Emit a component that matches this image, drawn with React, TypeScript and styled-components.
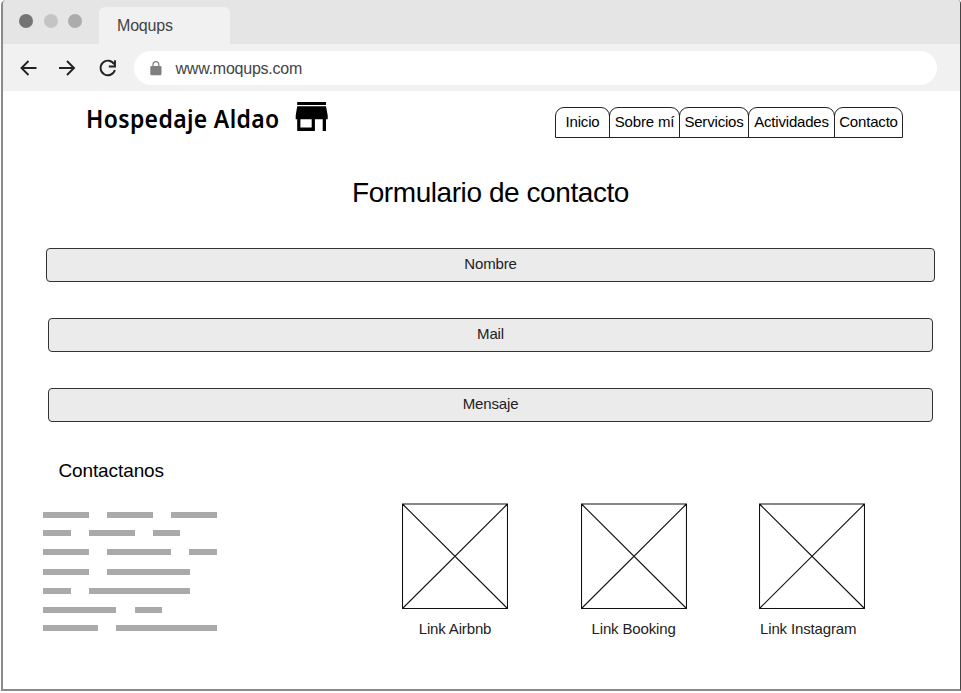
import React from "react";
import styled, { createGlobalStyle } from "styled-components";

const Global = createGlobalStyle`
  *, *::before, *::after { box-sizing: border-box; }
  body { margin: 0; background: #fff; font-family: "Liberation Sans", Arial, sans-serif; overflow: hidden; }
  h1, h2, p { margin: 0; font-weight: 400; }
  svg { display: block; flex: none; }
`;

const Window = styled.div`
  width: 960px;
  height: 691px;
  margin-left: 1px;
  border: solid #888b8b;
  border-width: 0 1px 2px 2px;
  border-right-color: #444;
  border-radius: 5px 4px 0 0;
  overflow: hidden;
  background: #fff;
  color: #000;
`;

const TitleBar = styled.header`
  display: flex;
  height: 44px;
  padding: 7px 0 0 16px;
  background: #e5e5e5;
`;

const Dots = styled.div`
  display: flex;
  gap: 10.6px;
  width: 80px;
  padding-top: 7px;
`;

const Dot = styled.span<{ $color: string }>`
  width: 14px;
  height: 14px;
  border-radius: 50%;
  background: ${(p) => p.$color};
`;

const BrowserTab = styled.div`
  width: 131px;
  height: 37px;
  padding-left: 18px;
  border-radius: 6px 6px 0 0;
  background: #f1f1f1;
  color: #444;
  font-size: 16px;
  letter-spacing: -0.2px;
  line-height: 37px;
`;

const ToolBar = styled.div`
  display: flex;
  align-items: center;
  height: 47px;
  padding: 0 23px 0 13px;
  background: #f1f1f1;
`;

const Controls = styled.div`
  display: flex;
  gap: 14px;
  width: 118px;
  padding-top: 1px;
`;

const Address = styled.div`
  display: flex;
  align-items: center;
  flex: 1;
  height: 34px;
  padding-left: 15.5px;
  gap: 14px;
  margin-top: 1px;
  border-radius: 17px;
  background: #fff;
  color: #444;
  font-size: 16px;
  letter-spacing: -0.23px;
  line-height: 18px;

  span { padding-top: 1px; }
`;

const SiteHeader = styled.div`
  display: flex;
  align-items: flex-start;
  justify-content: space-between;
  height: 76px;
  padding: 11px 57px 0 83px;
`;

const Brand = styled.div`
  display: flex;
  gap: 15px;
`;

const BrandName = styled.h1`
  width: 194px;
  font-family: "Noto Sans", sans-serif;
  font-size: 26px;
  font-weight: 600;
  line-height: 33px;
  letter-spacing: 0.4px;
  white-space: nowrap;
  transform: scaleX(0.883);
  transform-origin: 0 0;
`;

const Nav = styled.nav`
  display: flex;
  margin-top: 5px;
`;

const NavItem = styled.a<{ $w: number }>`
  width: ${(p) => p.$w}px;
  height: 31px;
  margin-left: -1px;
  border: 1px solid #222;
  border-radius: 9px 9px 0 0;
  font-size: 15px;
  letter-spacing: -0.18px;
  line-height: 27px;
  text-align: center;
  white-space: nowrap;
`;

const FormTitle = styled.h2`
  height: 81px;
  padding-right: 1px;
  padding-left: 19px;
  font-size: 28px;
  letter-spacing: -0.43px;
  line-height: 52px;
  text-align: center;
`;

const Form = styled.div`
  display: flex;
  flex-direction: column;
  align-items: center;
  gap: 36px;
  padding-left: 18px;
`;

const Field = styled.div<{ $w: number }>`
  width: ${(p) => p.$w}px;
  height: 34px;
  border: 1px solid #333;
  border-radius: 4px;
  background: #ebebeb;
  color: #222;
  font-size: 15px;
  letter-spacing: -0.15px;
  line-height: 29px;
  text-align: center;
`;

const Footer = styled.footer`
  display: flex;
  padding: 38px 0 0 40px;
`;

const ContactColumn = styled.div`
  width: 359px;
`;

const ContactTitle = styled.h2`
  padding-left: 15.4px;
  font-size: 19px;
  letter-spacing: -0.1px;
  line-height: 22px;
`;

const TextLines = styled.div`
  display: grid;
  grid-template-rows: 18px 19px 20px 19px 19px 18px 6px;
  margin-top: 30px;
`;

const TextLine = styled.div`
  display: flex;
  gap: 18.2px;
`;

const Word = styled.span<{ $n: number }>`
  width: ${(p) => p.$n * 9.17}px;
  height: 6px;
  background: #aaa;
`;

const Links = styled.div`
  display: grid;
  grid-template-columns: repeat(3, 106px);
  column-gap: 72.6px;
  padding-top: 43px;
`;

const LinkCard = styled.div<{ $shift?: number }>`
  color: #222;
  font-size: 15px;
  letter-spacing: -0.15px;
  line-height: 18px;
  text-align: center;

  p { margin: 11px 0 0 -${(p) => p.$shift ?? 0}px; white-space: nowrap; }
`;

const Stroke = { fill: "none", stroke: "#222", strokeWidth: 1.9 };

const Arrow = ({ right }: { right?: boolean }) => (
  <svg width="25" height="24" viewBox="0 0 25 24" {...Stroke}>
    {right ? <path d="M4 12H19.5M12 5l7 7-7 7" /> : <path d="M20.5 12H5M12.5 5l-7 7 7 7" />}
  </svg>
);

const Reload = () => (
  <svg width="25" height="24" viewBox="-1 0 25 24" {...Stroke}>
    <path d="M19.2 8.3A7.3 7.3 0 1 0 19.9 14" />
    <path d="M20 4.3v6.2h-6.2" />
  </svg>
);

const Lock = () => (
  <svg width="12" height="15" viewBox="0 0 12 15">
    <rect x="0.3" y="5" width="11.2" height="9.3" rx="1.3" fill="#808080" />
    <path d="M3 5.5V3.6a2.9 2.9 0 0 1 5.8 0v1.9" fill="none" stroke="#808080" strokeWidth="1.2" />
  </svg>
);

const Store = () => (
  <svg width="34" height="30" viewBox="0 0 34 30">
    <path fillRule="evenodd" d="M2.2 0H31v3.1H2.2zM2.2 4.3H31l1.7 9.2v3.8H31V29h-3.3V17.3h-7.8V29H2.2V17.3H.7v-3.8zM5.4 17.3v8.1h11.3v-8.1z" />
  </svg>
);

const Placeholder = () => (
  <svg width="106" height="106" viewBox="0 0 106 106" fill="none" stroke="#111" strokeWidth="1.1">
    <path d="M.5 1h105v104.5H.5zM.5 1l105 104.5M105.5 1L.5 105.5" />
  </svg>
);

const navItems = [
  { label: "Inicio", w: 55 },
  { label: "Sobre mí", w: 71 },
  { label: "Servicios", w: 70 },
  { label: "Actividades", w: 87 },
  { label: "Contacto", w: 69 },
];

const fields = [
  { label: "Nombre", w: 889 },
  { label: "Mail", w: 885 },
  { label: "Mensaje", w: 885 },
];

const links = [
  { label: "Link Airbnb" },
  { label: "Link Booking" },
  { label: "Link Instagram", shift: 8 },
];

const lines = [[5, 5, 5], [3, 5, 3], [5, 7, 3], [5, 9], [3, 11], [8, 3], [6, 11]];

export default function App() {
  return (
    <>
      <Global />
      <Window>
        <TitleBar>
          <Dots>
            <Dot $color="#747474" />
            <Dot $color="#c4c4c4" />
            <Dot $color="#acacac" />
          </Dots>
          <BrowserTab>Moqups</BrowserTab>
        </TitleBar>
        <ToolBar>
          <Controls>
            <Arrow />
            <Arrow right />
            <Reload />
          </Controls>
          <Address>
            <Lock />
            <span>www.moqups.com</span>
          </Address>
        </ToolBar>
        <SiteHeader>
          <Brand>
            <BrandName>Hospedaje Aldao</BrandName>
            <Store />
          </Brand>
          <Nav>
            {navItems.map((n) => (
              <NavItem key={n.label} $w={n.w}>{n.label}</NavItem>
            ))}
          </Nav>
        </SiteHeader>
        <FormTitle>Formulario de contacto</FormTitle>
        <Form>
          {fields.map((f) => (
            <Field key={f.label} $w={f.w}>{f.label}</Field>
          ))}
        </Form>
        <Footer>
          <ContactColumn>
            <ContactTitle>Contactanos</ContactTitle>
            <TextLines>
              {lines.map((words, i) => (
                <TextLine key={i}>
                  {words.map((n, j) => (
                    <Word key={j} $n={n} />
                  ))}
                </TextLine>
              ))}
            </TextLines>
          </ContactColumn>
          <Links>
            {links.map((l) => (
              <LinkCard key={l.label} $shift={l.shift}>
                <Placeholder />
                <p>{l.label}</p>
              </LinkCard>
            ))}
          </Links>
        </Footer>
      </Window>
    </>
  );
}
